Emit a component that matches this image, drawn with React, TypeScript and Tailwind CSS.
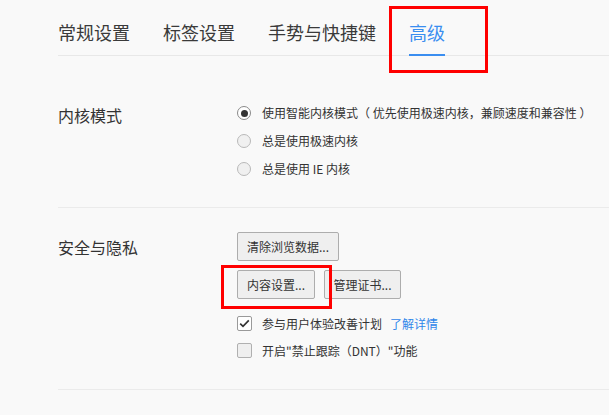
import React from "react";

const font = { fontFamily: '"Noto Sans CJK SC", "Microsoft YaHei", "Noto Sans", sans-serif' };

function Radio({ checked }: { checked?: boolean }) {
  return (
    <span
      className={`flex h-[14px] w-[14px] shrink-0 items-center justify-center rounded-full border ${
        checked ? "border-[#8a8a8a] bg-white" : "border-[#b9b9b9] bg-[#f0f0f0]"
      }`}
    >
      {checked && <span className="h-[7px] w-[7px] rounded-full bg-[#333]" />}
    </span>
  );
}

function Checkbox({ checked }: { checked?: boolean }) {
  return (
    <span
      className={`flex h-[15px] w-[15px] shrink-0 items-center justify-center rounded-[2px] border ${
        checked ? "border-[#9a9a9a] bg-white" : "border-[#b0b0b0] bg-[#efefef]"
      }`}
    >
      {checked && (
        <svg width="11" height="9" viewBox="0 0 11 9">
          <path d="M1.2 4.6 L4 7.3 L9.8 1.4" fill="none" stroke="#333" strokeWidth="1.7" />
        </svg>
      )}
    </span>
  );
}

function Btn({ w, children }: { w: string; children: React.ReactNode }) {
  return (
    <button
      className={`${w} flex h-[29px] items-center justify-center rounded-[2px] border border-[#adadad] bg-[#efefef] text-[12px] text-[#333]`}
    >
      {children}
    </button>
  );
}

export default function App() {
  const tabs = ["常规设置", "标签设置", "手势与快捷键", "高级"];
  return (
    <div className="relative h-[415px] w-[609px] overflow-hidden bg-[#f9f9f9]" style={font}>
      <div className="ml-[58px] flex gap-[33px] border-b border-[#e8e8e8] pt-[20px]">
        {tabs.map((t, i) => (
          <div
            key={t}
            className={`-mb-px border-b-2 pb-[10px] text-[18px] leading-[24px] ${
              i === 3 ? "border-[#3a8ef0] text-[#3a8ef0]" : "border-transparent text-[#3a3a3a]"
            }`}
          >
            {t}
          </div>
        ))}
      </div>

      <div className="ml-[58px] flex border-b border-[#ebebeb] pb-[24px] pt-[43px]">
        <div className="w-[179px] pt-[2px] text-[16px] leading-[28px] text-[#333]">内核模式</div>
        <div className="flex flex-col">
          {[
            ["使用智能内核模式（ 优先使用极速内核，兼顾速度和兼容性 ）", true],
            ["总是使用极速内核", false],
            ["总是使用 IE 内核", false],
          ].map(([label, c]) => (
            <div key={label as string} className="flex h-[28px] items-center gap-[11px] text-[12px] text-[#333]">
              <Radio checked={c as boolean} />
              <span className="whitespace-pre">{label as string}</span>
            </div>
          ))}
        </div>
      </div>

      <div className="ml-[58px] flex border-b border-[#ebebeb] pb-[25px] pt-[24px]">
        <div className="w-[179px] pt-[1px] text-[16px] leading-[29px] text-[#333]">安全与隐私</div>
        <div className="flex flex-col">
          <Btn w="w-[102px]">清除浏览数据...</Btn>
          <div className="mt-[9px] flex gap-[9px]">
            <Btn w="w-[78px]">内容设置...</Btn>
            <Btn w="w-[77px]">管理证书...</Btn>
          </div>
          <div className="mt-[11px] flex h-[27px] items-center gap-[10px] text-[12px] text-[#333]">
            <Checkbox checked />
            <span>
              参与用户体验改善计划<span className="ml-[8px] text-[#2f86ea]">了解详情</span>
            </span>
          </div>
          <div className="flex h-[27px] items-center gap-[10px] text-[12px] text-[#333]">
            <Checkbox />
            <span>开启"禁止跟踪（DNT）"功能</span>
          </div>
        </div>
      </div>

      <div className="absolute left-[389px] top-[6px] h-[67px] w-[99px] border-[3px] border-[#f00]" />
      <div className="absolute left-[221px] top-[265px] h-[44px] w-[111px] border-[3px] border-[#f00]" />
    </div>
  );
}
